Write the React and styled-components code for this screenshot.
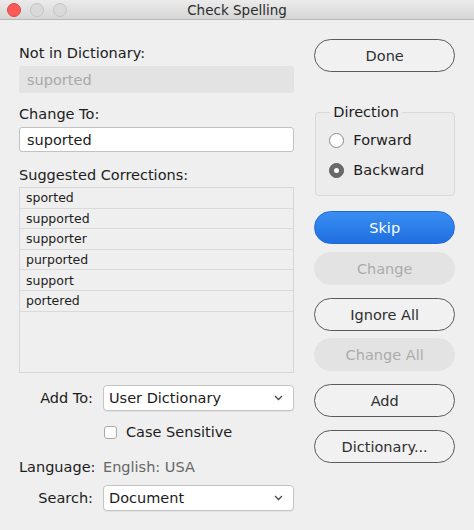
import React from 'react';
import styled, { createGlobalStyle } from 'styled-components';

const GlobalStyle = createGlobalStyle`
  html, body {
    margin: 0;
    padding: 0;
    background: #efefef;
  }
  body {
    font-family: "DejaVu Sans", "Liberation Sans", sans-serif;
    color: #1c1c1c;
  }
`;

const Window = styled.div`
  width: 474px;
  height: 530px;
  background: #efefef;
  overflow: hidden;
`;

const TitleBar = styled.div`
  height: 19px;
  display: flex;
  align-items: center;
  justify-content: center;
  position: relative;
  background: linear-gradient(#ebebeb, #d6d6d6);
  border-bottom: 1px solid #b9b9b9;
  font-size: 13.5px;
  color: #2b2b2b;
`;

const Lights = styled.div`
  position: absolute;
  left: 7px;
  top: 3px;
  display: flex;
  gap: 9px;
`;

const Light = styled.span`
  width: 14px;
  height: 14px;
  box-sizing: border-box;
  border-radius: 50%;
  background: ${(p) => (p.$red ? '#fc5b57' : '#d9d9d9')};
  border: 1px solid ${(p) => (p.$red ? '#e2463f' : '#c4c4c4')};
`;

const Body = styled.div`
  display: flex;
  padding: 0 19px;
  gap: 20px;
`;

const LeftColumn = styled.div`
  width: 276px;
  display: flex;
  flex-direction: column;
`;

const RightColumn = styled.div`
  width: 141px;
  display: flex;
  flex-direction: column;
`;

const Label = styled.div`
  font-size: 14.5px;
  line-height: 18px;
  margin-top: ${(p) => p.$top}px;
`;

const Field = styled.div`
  box-sizing: border-box;
  height: ${(p) => (p.$disabled ? 27 : 25)}px;
  margin-top: 4px;
  padding: 0 7px;
  display: flex;
  align-items: center;
  font-size: 14.5px;
  border-radius: 3px;
  background: ${(p) => (p.$disabled ? '#e3e3e3' : '#ffffff')};
  color: ${(p) => (p.$disabled ? '#a9a9a9' : '#1c1c1c')};
  border: 1px solid ${(p) => (p.$disabled ? '#e3e3e3' : '#c2c2c2')};
`;

const List = styled.div`
  box-sizing: border-box;
  height: 186px;
  margin-top: 3px;
  border: 1px solid #d7d7d7;
  background: #efefef;
`;

const ListRow = styled.div`
  height: 20.6px;
  box-sizing: border-box;
  padding-left: 6px;
  display: flex;
  align-items: center;
  font-size: 12.5px;
  border-bottom: 1px solid #dadada;
`;

const FormRow = styled.div`
  display: grid;
  grid-template-columns: 77px 1fr;
  column-gap: 7px;
  align-items: center;
  margin-top: ${(p) => p.$top}px;
`;

const RowLabel = styled.div`
  font-size: 14.5px;
  line-height: 18px;
  text-align: ${(p) => (p.$left ? 'left' : 'right')};
  padding-right: 3px;
  white-space: nowrap;
`;

const Select = styled.div`
  box-sizing: border-box;
  height: 26px;
  padding: 0 10px 0 5px;
  display: flex;
  align-items: center;
  justify-content: space-between;
  background: #ffffff;
  border: 1px solid #c4c4c4;
  border-radius: 4px;
  font-size: 14.5px;
  box-shadow: 0 1px 1px rgba(0, 0, 0, 0.06);
`;

const CheckLine = styled.label`
  display: flex;
  align-items: center;
  gap: 9px;
  font-size: 14.5px;
  line-height: 18px;
`;

const CheckBox = styled.span`
  width: 13px;
  height: 13px;
  box-sizing: border-box;
  margin-left: 1px;
  background: #ffffff;
  border: 1px solid #a9a9a9;
  border-radius: 3px;
`;

const Value = styled.div`
  font-size: 14.5px;
  color: #666666;
`;

const Button = styled.div`
  box-sizing: border-box;
  height: 33px;
  margin-top: ${(p) => p.$top}px;
  display: flex;
  align-items: center;
  justify-content: center;
  border-radius: 17px;
  font-size: 14.5px;
  ${(p) =>
    p.$primary
      ? `background: linear-gradient(#3a8ef2, #1f6fe0);
         color: #ffffff;
         border: 1px solid #1d6bd8;`
      : p.$disabled
      ? `background: #e3e3e3;
         color: #ababab;
         border: 1px solid #e3e3e3;`
      : `background: #f1f1f1;
         color: #2f2f2f;
         border: 1px solid #5a5a5a;`}
`;

const Group = styled.fieldset`
  margin: 32px 0 0 1px;
  padding: 4px 0 10px 13px;
  border: 1px solid #d9d9d9;
  border-radius: 4px;
  background: #ececec;
  display: flex;
  flex-direction: column;
`;

const Legend = styled.legend`
  font-size: 14.5px;
  line-height: 17px;
  padding: 0 3px;
  margin-left: 1px;
`;

const RadioLine = styled.div`
  display: flex;
  align-items: center;
  gap: 9px;
  height: 30px;
  font-size: 14.5px;
`;

const RadioDot = styled.span`
  width: 15px;
  height: 15px;
  box-sizing: border-box;
  border-radius: 50%;
  display: flex;
  align-items: center;
  justify-content: center;
  background: ${(p) => (p.$on ? '#6a6a6a' : '#ffffff')};
  border: 1px solid ${(p) => (p.$on ? '#5e5e5e' : '#8a8a8a')};

  &::after {
    content: '';
    width: 5px;
    height: 5px;
    border-radius: 50%;
    background: #ffffff;
    display: ${(p) => (p.$on ? 'block' : 'none')};
  }
`;

const Chevron = () => (
  <svg width="9" height="6" viewBox="0 0 9 6">
    <path d="M1 1l3.5 3.5L8 1" fill="none" stroke="#4a4a4a" strokeWidth="1.3" />
  </svg>
);

const suggestions = ['sported', 'supported', 'supporter', 'purported', 'support', 'portered'];

const App = () => {
  return (
    <Window>
      <GlobalStyle />
      <TitleBar>
        <Lights>
          <Light $red />
          <Light />
          <Light />
        </Lights>
        Check Spelling
      </TitleBar>
      <Body>
        <LeftColumn>
          <Label $top={24}>Not in Dictionary:</Label>
          <Field $disabled>suported</Field>
          <Label $top={12}>Change To:</Label>
          <Field>suported</Field>
          <Label $top={14}>Suggested Corrections:</Label>
          <List>
            {suggestions.map((word) => (
              <ListRow key={word}>{word}</ListRow>
            ))}
          </List>
          <FormRow $top={12}>
            <RowLabel>Add To:</RowLabel>
            <Select>
              User Dictionary
              <Chevron />
            </Select>
          </FormRow>
          <FormRow $top={12}>
            <span />
            <CheckLine>
              <CheckBox />
              Case Sensitive
            </CheckLine>
          </FormRow>
          <FormRow $top={17}>
            <RowLabel $left>Language:</RowLabel>
            <Value>English: USA</Value>
          </FormRow>
          <FormRow $top={9}>
            <RowLabel>Search:</RowLabel>
            <Select>
              Document
              <Chevron />
            </Select>
          </FormRow>
        </LeftColumn>
        <RightColumn>
          <Button $top={19}>Done</Button>
          <Group>
            <Legend>Direction</Legend>
            <RadioLine>
              <RadioDot />
              Forward
            </RadioLine>
            <RadioLine>
              <RadioDot $on />
              Backward
            </RadioLine>
          </Group>
          <Button $top={15} $primary>Skip</Button>
          <Button $top={8} $disabled>Change</Button>
          <Button $top={13}>Ignore All</Button>
          <Button $top={7} $disabled>Change All</Button>
          <Button $top={13}>Add</Button>
          <Button $top={13}>Dictionary...</Button>
        </RightColumn>
      </Body>
    </Window>
  );
};

export default App;
